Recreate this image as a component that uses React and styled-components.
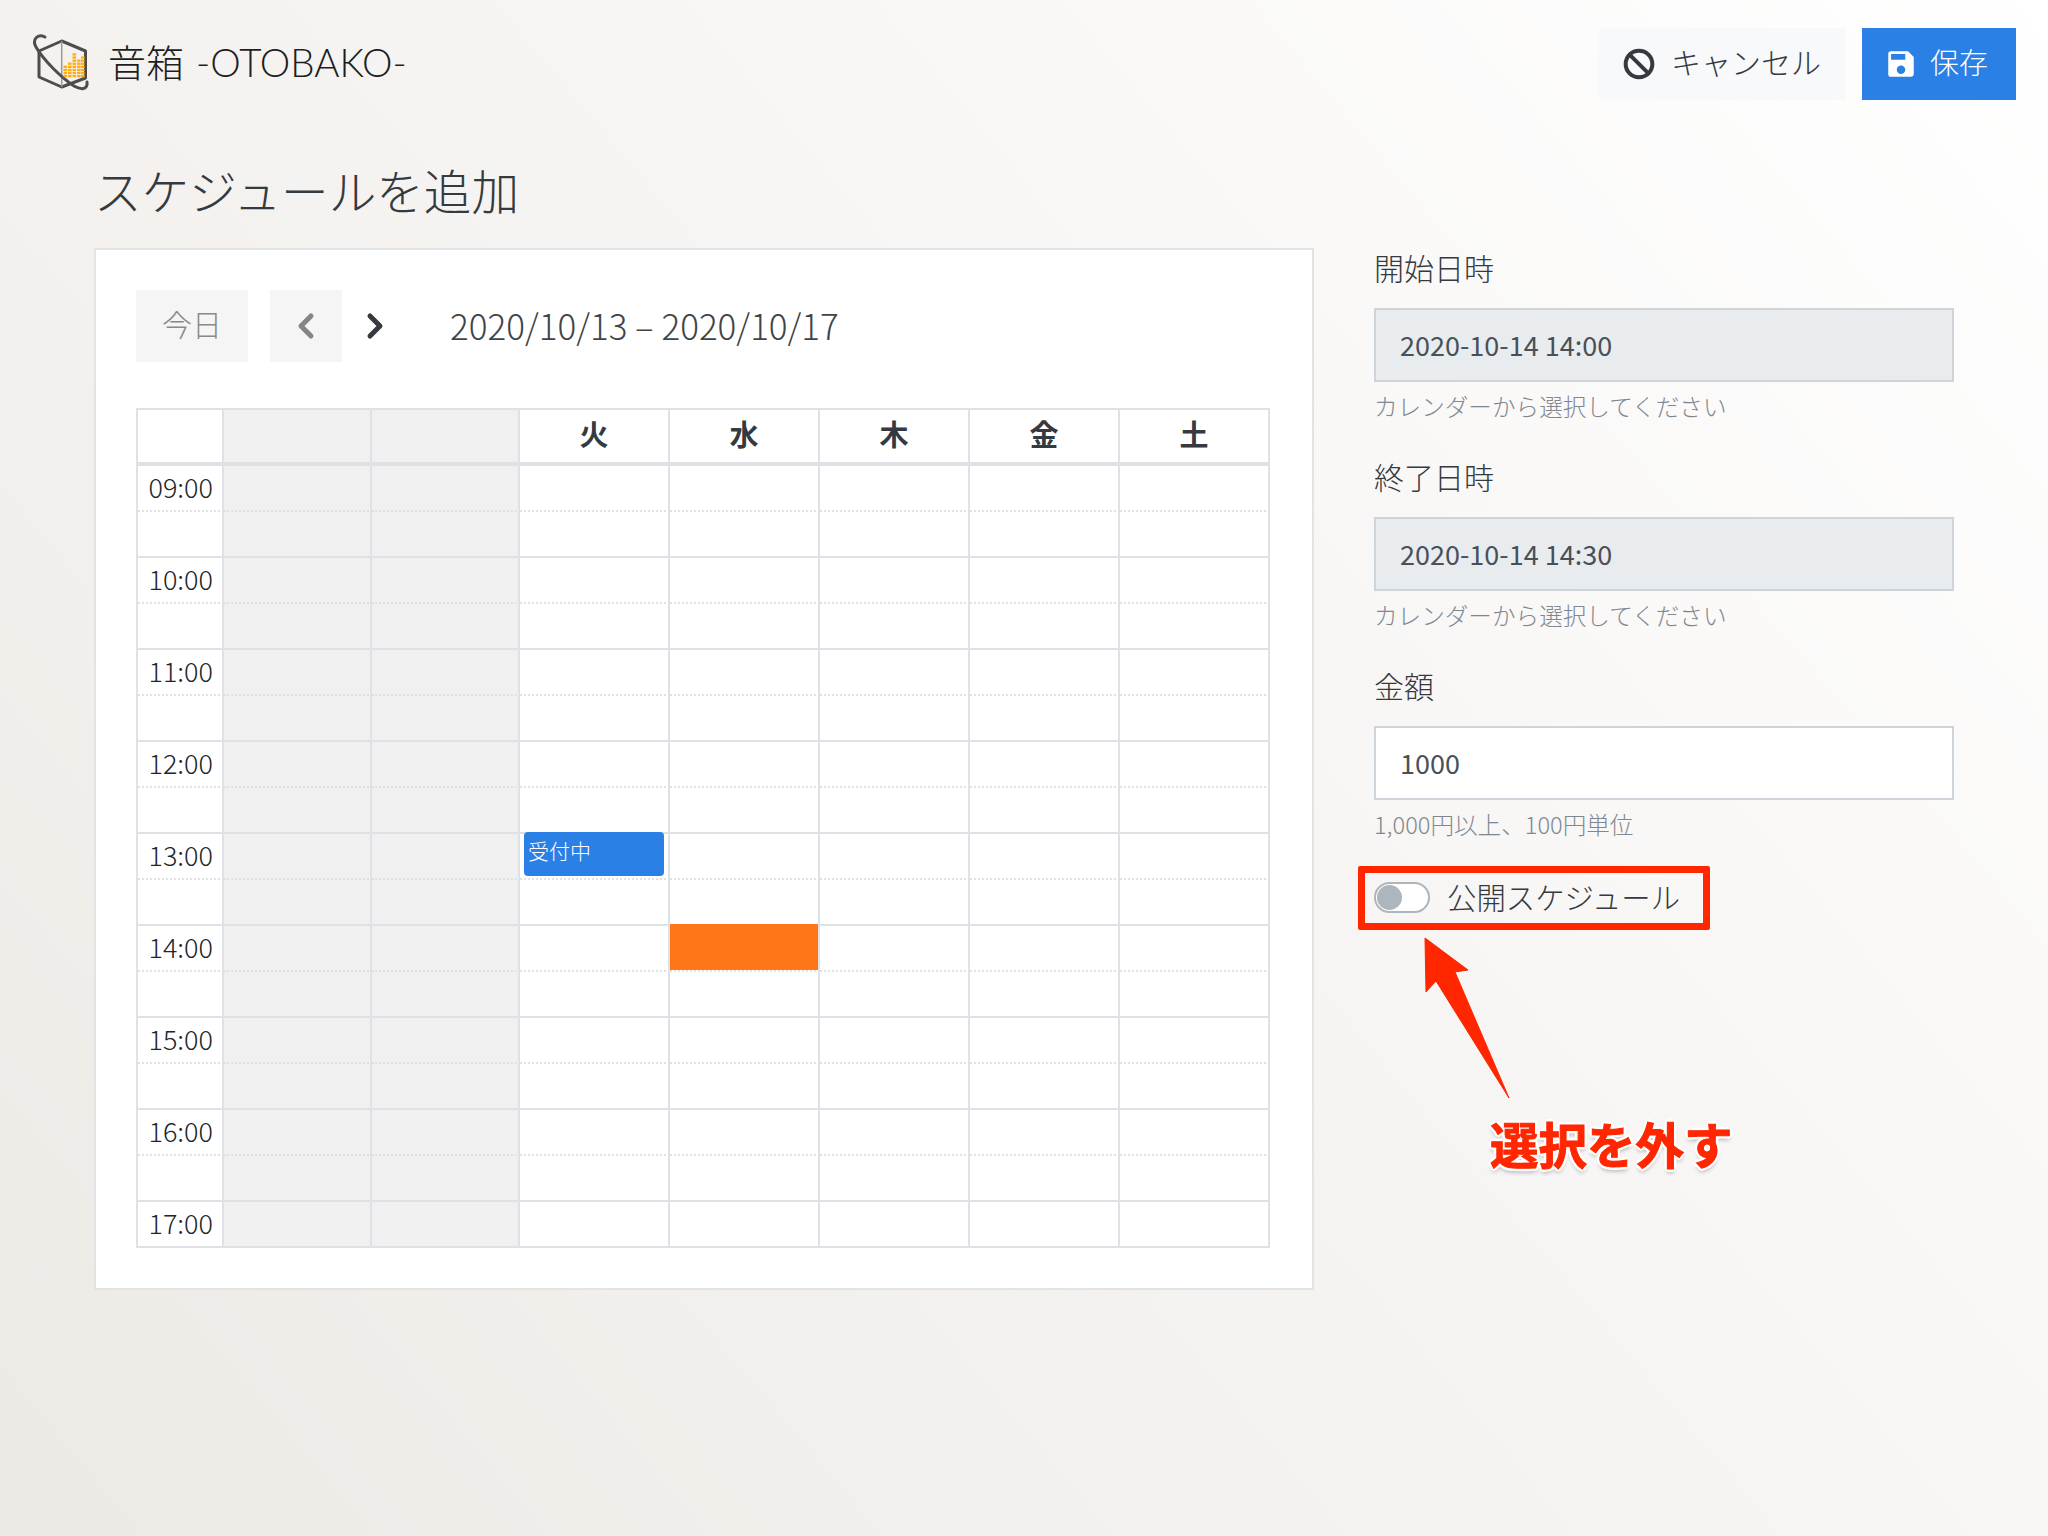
import React from "react";
import styled, { createGlobalStyle } from "styled-components";
import { Ban, ChevronLeft, ChevronRight } from "lucide-react";
import { MdSave } from "react-icons/md";

const GlobalStyle = createGlobalStyle`
  html, body {
    margin: 0;
    padding: 0;
  }
  body {
    font-family: "Noto Sans CJK JP", "Noto Sans", sans-serif;
    color: #343a40;
  }
  * {
    box-sizing: border-box;
  }
`;

const Page = styled.div`
  width: 2048px;
  height: 1536px;
  overflow: hidden;
  background: linear-gradient(50deg, #ede9e5, #ffffff);
`;

const Header = styled.header`
  display: flex;
  align-items: center;
  justify-content: space-between;
  height: 100px;
  padding: 28px 32px 0 24px;
`;

const Brand = styled.div`
  display: flex;
  align-items: center;
  gap: 8px;
  color: #1e1e1e;
`;

const BrandText = styled.div`
  margin-bottom: 8px;
`;

const BrandKanji = styled.span`
  font-size: 38px;
  font-weight: 300;
  margin-right: 12px;
`;

const BrandLatin = styled.span`
  font-family: Lato, sans-serif;
  font-size: 38.5px;
  font-weight: 300;
`;

const Actions = styled.div`
  display: flex;
  gap: 16px;
`;

const ActionButton = styled.button`
  display: flex;
  align-items: center;
  justify-content: center;
  gap: ${(p) => (p.$primary ? 12 : 16)}px;
  height: 72px;
  width: ${(p) => p.$width}px;
  border: none;
  padding: ${(p) => (p.$primary ? "0 6px 6px 0" : "0 0 6px 0")};
  font-family: inherit;
  font-size: ${(p) => (p.$primary ? 29 : 30)}px;
  font-weight: 300;
  background: ${(p) => (p.$primary ? "#2b80e5" : "#f8f9fa")};
  color: ${(p) => (p.$primary ? "#ffffff" : "#343a40")};
  svg {
    margin-top: 6px;
  }
`;

const PageTitle = styled.h1`
  margin: 63px 0 0 94px;
  height: 60px;
  font-size: 47.6px;
  line-height: 54px;
  font-weight: 300;
  color: #343a40;
`;

const Main = styled.main`
  display: flex;
  gap: 60px;
  margin: 25px 0 0 94px;
  align-items: flex-start;
`;

const Card = styled.section`
  width: 1220px;
  padding: 40px 40px 40px 40px;
  background: #ffffff;
  border: 2px solid #e2e3e4;
`;

const Toolbar = styled.div`
  display: flex;
  align-items: center;
  height: 72px;
  margin-bottom: 46px;
`;

const TodayButton = styled.div`
  display: flex;
  align-items: center;
  justify-content: center;
  width: 112px;
  height: 72px;
  margin-right: 22px;
  padding-bottom: 6px;
  background: #f5f5f5;
  color: #8a8a8a;
  font-size: 30px;
  font-weight: 300;
`;

const NavButton = styled.div`
  display: flex;
  align-items: center;
  justify-content: center;
  width: ${(p) => (p.$disabled ? 72 : 66)}px;
  height: 72px;
  background: ${(p) => (p.$disabled ? "#f5f5f5" : "transparent")};
  color: ${(p) => (p.$disabled ? "#858585" : "#343a40")};
`;

const RangeText = styled.h2`
  margin: 0 0 4px 42px;
  font-size: 35px;
  font-weight: 300;
  color: #3f4448;
`;

const Table = styled.div`
  width: 1134px;
  border-left: 2px solid #dee2e6;
  border-top: 2px solid #dee2e6;
  border-bottom: 2px solid #dee2e6;
`;

const Row = styled.div`
  display: grid;
  grid-template-columns: 86px 148px 148px repeat(5, 150px);
`;

const HeadCell = styled.div`
  display: flex;
  align-items: center;
  justify-content: center;
  height: 54px;
  padding-bottom: 6px;
  border-right: 2px solid #dee2e6;
  border-bottom: 2px solid #dee2e6;
  background: ${(p) => (p.$off ? "#f0f0f0" : "#ffffff")};
  font-size: 29px;
  font-weight: 700;
  color: #343a40;
`;

const Slot = styled.div`
  position: relative;
  height: 46px;
  border-right: 2px solid #dee2e6;
  border-top: 2px ${(p) => (p.$minor ? "dotted" : "solid")} #dee2e6;
  background: ${(p) => (p.$off ? "#f0f0f0" : "#ffffff")};
`;

const TimeSlot = styled(Slot)`
  display: flex;
  align-items: center;
  justify-content: flex-end;
  padding: 0 9px 4px 0;
  font-size: 27px;
  font-weight: 300;
  color: #212529;
`;

const Booked = styled.div`
  position: absolute;
  top: -2px;
  left: 4px;
  right: 4px;
  height: 44px;
  padding: 0 4px 8px;
  display: flex;
  align-items: center;
  border-radius: 4px;
  background: #2b80e5;
  color: #ffffff;
  font-size: 21px;
  font-weight: 300;
`;

const Picked = styled.div`
  position: absolute;
  top: -2px;
  left: 0;
  right: 0;
  height: 46px;
  background: #ff7618;
`;

const Side = styled.aside`
  position: relative;
  width: 580px;
`;

const Field = styled.div`
  margin-bottom: 33px;
`;

const Label = styled.label`
  display: block;
  height: 40px;
  margin-bottom: 20px;
  font-size: 30px;
  font-weight: 300;
  line-height: 38px;
  color: #343a40;
`;

const Input = styled.input`
  display: block;
  width: 100%;
  height: 74px;
  padding: 0 24px 2px;
  border: 2px solid #ced4da;
  border-radius: 0;
  outline: none;
  background: ${(p) => (p.$locked ? "#e9ecef" : "#ffffff")};
  font-family: inherit;
  font-size: 27px;
  font-weight: 400;
  color: #495057;
`;

const Hint = styled.small`
  display: block;
  height: 36px;
  margin-top: 6px;
  font-size: 23.6px;
  font-weight: 300;
  line-height: 36px;
  color: #7f8891;
`;

const SwitchRow = styled.div`
  position: relative;
  display: flex;
  align-items: center;
  gap: 17px;
  margin-top: 40px;
  height: 31px;
`;

const Switch = styled.div`
  display: flex;
  align-items: center;
  width: 56px;
  height: 31px;
  padding: 0 1px;
  border: 2px solid #adb5bd;
  border-radius: 16px;
  background: #ffffff;
`;

const Thumb = styled.div`
  width: 25px;
  height: 25px;
  border-radius: 50%;
  background: #adb5bd;
`;

const SwitchLabel = styled.span`
  margin-bottom: 4px;
  font-size: 29.4px;
  font-weight: 300;
  color: #343a40;
`;

const RedFrame = styled.div`
  position: absolute;
  left: -16px;
  top: -16px;
  width: 352px;
  height: 64px;
  border: 7px solid #ff2600;
  border-radius: 2px;
`;

const Arrow = styled.svg`
  position: absolute;
  left: 46px;
  top: 687px;
`;

const Note = styled.div`
  position: absolute;
  left: 116px;
  top: 864px;
  font-size: 48.5px;
  font-weight: 700;
  line-height: 62px;
  white-space: nowrap;
  color: #ff2600;
  -webkit-text-stroke: 1px #ff2600;
  text-shadow: 3px 0 0 #fff, -3px 0 0 #fff, 0 3px 0 #fff, 0 -3px 0 #fff,
    2px 2px 0 #fff, -2px 2px 0 #fff, 2px -2px 0 #fff, -2px -2px 0 #fff,
    0 4px 4px rgba(0, 0, 0, 0.3);
`;

const days = ["", "", "火", "水", "木", "金", "土"];
const hours = ["09", "10", "11", "12", "13", "14", "15", "16", "17"];

// bars of the equalizer in the logo: [x, number of blocks]
const bars = [
  [39.5, 4],
  [44, 5],
  [48.5, 8],
  [53, 6],
  [57, 7],
];

function Logo() {
  return (
    <svg width="76" height="72" viewBox="0 0 76 72" fill="none">
      <path
        d="M37.7 13 L61.5 23 V50 L37.7 59 L15 49 V23 Z"
        stroke="#4d4d4d"
        strokeWidth="3"
        strokeLinejoin="round"
      />
      <path d="M37.7 13 V59" stroke="#9a9a9a" strokeWidth="1.5" />
      <path
        d="M21 9 C13 5 8 12 12 19 C20 33 38 50 50 58 C57 62 64 62 63 54"
        stroke="#4d4d4d"
        strokeWidth="3"
        strokeLinecap="round"
      />
      {bars.map(([x, count]) =>
        Array.from({ length: count }, (_, i) => (
          <rect
            key={`${x}-${i}`}
            x={x}
            y={47 - i * 3.1}
            width="3.6"
            height="2.3"
            fill="#ffae12"
          />
        ))
      )}
    </svg>
  );
}

function HourRows({ hour }) {
  const label = `${hour}:00`;
  const slots = hour === "17" ? [0] : [0, 1];

  return slots.map((half) => (
    <Row key={half}>
      <TimeSlot $minor={half === 1}>{half === 0 ? label : ""}</TimeSlot>
      {days.map((_, col) => (
        <Slot key={col} $minor={half === 1} $off={col < 2}>
          {hour === "13" && half === 0 && col === 2 && <Booked>受付中</Booked>}
          {hour === "14" && half === 0 && col === 3 && <Picked />}
        </Slot>
      ))}
    </Row>
  ));
}

function Calendar() {
  return (
    <Card>
      <Toolbar>
        <TodayButton>今日</TodayButton>
        <NavButton $disabled>
          <ChevronLeft size={40} strokeWidth={3} />
        </NavButton>
        <NavButton>
          <ChevronRight size={40} strokeWidth={3} />
        </NavButton>
        <RangeText>2020/10/13 – 2020/10/17</RangeText>
      </Toolbar>
      <Table>
        <Row>
          <HeadCell />
          {days.map((day, i) => (
            <HeadCell key={i} $off={i < 2}>
              {day}
            </HeadCell>
          ))}
        </Row>
        {hours.map((hour) => (
          <HourRows key={hour} hour={hour} />
        ))}
      </Table>
    </Card>
  );
}

export default function App() {
  return (
    <Page>
      <GlobalStyle />
      <Header>
        <Brand>
          <Logo />
          <BrandText>
            <BrandKanji>音箱</BrandKanji>
            <BrandLatin>-OTOBAKO-</BrandLatin>
          </BrandText>
        </Brand>
        <Actions>
          <ActionButton $width={248}>
            <Ban size={32} strokeWidth={3} />
            キャンセル
          </ActionButton>
          <ActionButton $primary $width={154}>
            <MdSave size={34} />
            保存
          </ActionButton>
        </Actions>
      </Header>
      <PageTitle>スケジュールを追加</PageTitle>
      <Main>
        <Calendar />
        <Side>
          <Field>
            <Label>開始日時</Label>
            <Input $locked readOnly value="2020-10-14 14:00" />
            <Hint>カレンダーから選択してください</Hint>
          </Field>
          <Field>
            <Label>終了日時</Label>
            <Input $locked readOnly value="2020-10-14 14:30" />
            <Hint>カレンダーから選択してください</Hint>
          </Field>
          <Field>
            <Label>金額</Label>
            <Input readOnly value="1000" />
            <Hint>1,000円以上、100円単位</Hint>
          </Field>
          <SwitchRow>
            <Switch>
              <Thumb />
            </Switch>
            <SwitchLabel>公開スケジュール</SwitchLabel>
            <RedFrame />
          </SwitchRow>
          <Arrow width="95" height="167" viewBox="0 0 95 167">
            <path
              d="M5 3 L48 35 L35 37 L89 163 L16 46 L6 57 Z"
              fill="#ff2600"
              stroke="#ff2600"
              strokeWidth="1"
              strokeLinejoin="round"
            />
          </Arrow>
          <Note>選択を外す</Note>
        </Side>
      </Main>
    </Page>
  );
}
